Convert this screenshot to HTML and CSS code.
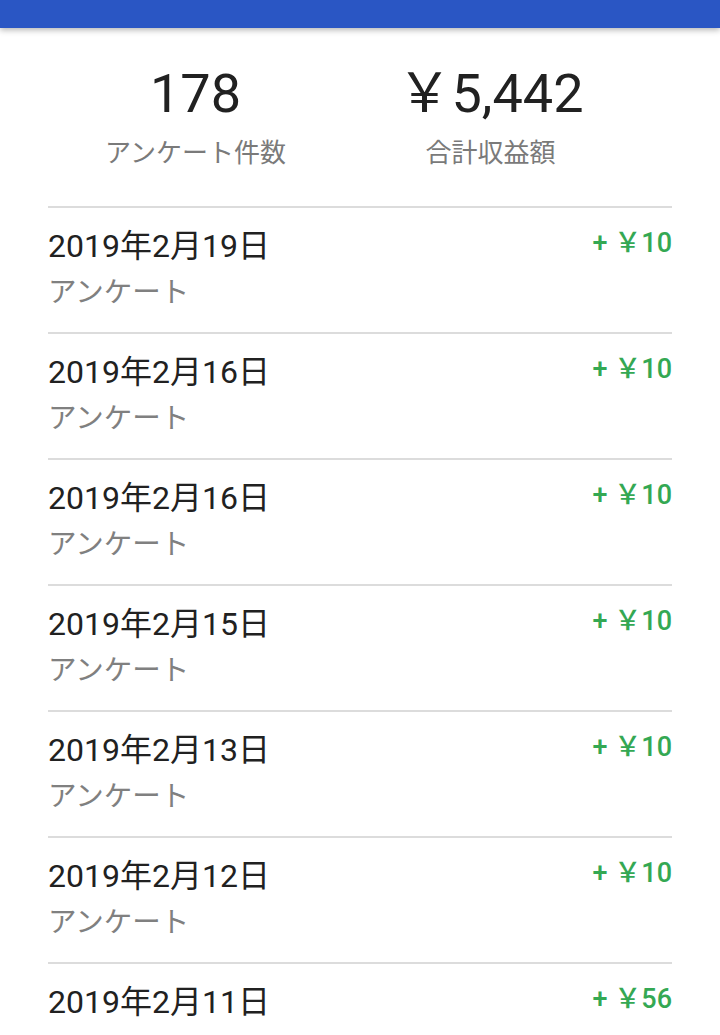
FILE: index.html
```html
<!DOCTYPE html>
<html lang="ja">
  <head>
    <meta charset="UTF-8">
    <meta name="viewport" content="width=device-width, initial-scale=1.0">
    <title>収益履歴</title>
    <link rel="stylesheet" href="styles.css">
  </head>
  <body>
    <header class="app-bar"></header>

    <section class="summary">
      <div class="stat">
        <div class="stat-value">178</div>
        <div class="stat-label">アンケート件数</div>
      </div>
      <div class="stat">
        <div class="stat-value">￥5,442</div>
        <div class="stat-label">合計収益額</div>
      </div>
    </section>

    <ul class="history">
      <li class="entry">
        <div class="entry-info">
          <div class="entry-date">2019年2月19日</div>
          <div class="entry-type">アンケート</div>
        </div>
        <div class="entry-amount">+ ￥10</div>
      </li>
      <li class="entry">
        <div class="entry-info">
          <div class="entry-date">2019年2月16日</div>
          <div class="entry-type">アンケート</div>
        </div>
        <div class="entry-amount">+ ￥10</div>
      </li>
      <li class="entry">
        <div class="entry-info">
          <div class="entry-date">2019年2月16日</div>
          <div class="entry-type">アンケート</div>
        </div>
        <div class="entry-amount">+ ￥10</div>
      </li>
      <li class="entry">
        <div class="entry-info">
          <div class="entry-date">2019年2月15日</div>
          <div class="entry-type">アンケート</div>
        </div>
        <div class="entry-amount">+ ￥10</div>
      </li>
      <li class="entry">
        <div class="entry-info">
          <div class="entry-date">2019年2月13日</div>
          <div class="entry-type">アンケート</div>
        </div>
        <div class="entry-amount">+ ￥10</div>
      </li>
      <li class="entry">
        <div class="entry-info">
          <div class="entry-date">2019年2月12日</div>
          <div class="entry-type">アンケート</div>
        </div>
        <div class="entry-amount">+ ￥10</div>
      </li>
      <li class="entry">
        <div class="entry-info">
          <div class="entry-date">2019年2月11日</div>
          <div class="entry-type">アンケート</div>
        </div>
        <div class="entry-amount">+ ￥56</div>
      </li>
    </ul>
  </body>
</html>
```

FILE: styles.css
```css
html,
body {
  margin: 0;
  height: 100%;
  overflow: hidden;
}

body {
  font-family: Roboto, "Noto Sans CJK JP", sans-serif;
  background-color: #fff;
  color: #212121;
}

.app-bar {
  height: 28px;
  background-color: #2a56c4;
  box-shadow: 0 2px 6px rgba(0, 0, 0, 0.3);
}

.summary {
  display: grid;
  grid-template-columns: 295px 295px;
  padding: 36px 0 35px 48px;
}

.stat {
  text-align: center;
}

.stat-value {
  font-size: 54px;
  line-height: 60px;
}

.stat-label {
  margin-top: 11px;
  font-size: 26px;
  line-height: 36px;
  color: #7a7a7a;
}

.history {
  list-style: none;
  margin: 0 48px;
  padding: 0;
}

.entry {
  display: flex;
  justify-content: space-between;
  align-items: flex-start;
  border-top: 2px solid #dcdcdc;
  padding: 18px 0 19px;
}

.entry-date {
  font-size: 32px;
  line-height: 40px;
}

.entry-type {
  margin-top: 7px;
  font-size: 28.5px;
  line-height: 40px;
  color: #808080;
}

.entry-amount {
  margin-top: -3px;
  font-size: 27px;
  font-weight: 500;
  line-height: 40px;
  color: #34a853;
}
```
